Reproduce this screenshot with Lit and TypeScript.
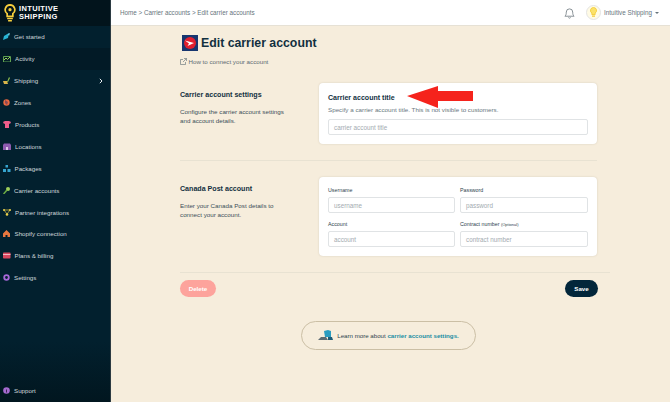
import { LitElement, html, css, svg } from 'lit';
import { customElement } from 'lit/decorators.js';

const NAV = [
  { label: 'Get started', w: 7, icon: svg`<path d="M0 7l1-4 5-3-1 5z" fill="#27b5d6"/><path d="M5 1l2-1-1 3z" fill="#7ddcf0"/>` },
  { label: 'Activity', w: 8, icon: svg`<path d="M.5 1.500h7v5.500h-7z" fill="none" stroke="#5fa050"/><path d="M1 5l2-2 1.500 1.500L7 2" fill="none" stroke="#9ccf5a"/>` },
  { label: 'Shipping', w: 7, icon: svg`<path d="M0 4h4l1 3H1z" fill="#d9b44a"/><path d="M4 5l2-5 1 1-2 4z" fill="#8fbf4d"/>` },
  { label: 'Zones', w: 7, icon: svg`<circle cx="3.500" cy="3.500" r="3.200" fill="#e8673f"/><path d="M2 1l3 2-1 3-2-2z" fill="#8a4a55"/>` },
  { label: 'Products', w: 8, icon: svg`<path d="M0 1l2-1h4l2 1-1 2-1-.5V7H2V2.500L1 3z" fill="#ee5d8b"/>` },
  { label: 'Locations', w: 8, icon: svg`<path d="M0 2l1-1.500h6L8 2v5H0z" fill="#8d5bb0"/><path d="M3 4h2v3H3z" fill="#d9c6e6"/>` },
  { label: 'Packages', w: 7.5, icon: svg`<path d="M2.500 0h2.500v2.500H2.500zM0 4h3v3H0zM4.500 4h3v3h-3z" fill="#36a5d0"/>` },
  { label: 'Carrier accounts', w: 7, icon: svg`<circle cx="5" cy="2" r="2" fill="#9fcf5a"/><path d="M4 3L.5 7" stroke="#6fae45" stroke-width="1.500"/>` },
  { label: 'Partner integrations', w: 8, icon: svg`<path d="M1 1l3 4 3-4z" fill="none" stroke="#c9b341" stroke-width=".8"/><circle cx="1" cy="1" r="1" fill="#ecd14a"/><circle cx="7" cy="1" r="1" fill="#ecd14a"/><circle cx="4" cy="5.500" r="1.300" fill="#ecd14a"/>` },
  { label: 'Shopify connection', w: 7.5, icon: svg`<path d="M0 3.500L3.500 0 7 3.500V7H4.500V5h-2v2H0z" fill="#e8773f"/>` },
  { label: 'Plans & billing', w: 7.5, icon: svg`<rect y=".5" width="7.500" height="6" rx=".8" fill="#d8475f"/><path d="M0 2h7.500v1H0z" fill="#f2b5bf"/>` },
  { label: 'Settings', w: 7, icon: svg`<circle cx="3.500" cy="3.500" r="2.300" fill="none" stroke="#a867d8" stroke-width="1.800"/>` },
];

@customElement('app-root')
export class AppRoot extends LitElement {
  static styles = css`
    :host {
      display: block;
      width: 670px;
      height: 402px;
      font-family: 'Liberation Sans', Arial, sans-serif;
      color: #12303f;
      overflow: hidden;
    }
    .app {
      display: flex;
      height: 402px;
    }
    .sidebar {
      width: 110px;
      flex: none;
      display: flex;
      flex-direction: column;
      background: linear-gradient(#02202e 85%, #01161f);
      color: #cfd8dc;
      border-right: 1px solid #2b3a42;
    }
    .brand {
      height: 26px;
      box-sizing: border-box;
      padding: 4px 0 0 4px;
      display: flex;
      gap: 3px;
      background: #02141c;
    }
    .brand-name {
      color: #fff;
      font-size: 7.5px;
      line-height: 8px;
      font-weight: 700;
      letter-spacing: 0.35px;
      padding-top: 1px;
    }
    nav {
      display: flex;
      flex-direction: column;
    }
    .nav-item {
      height: 21.9px;
      display: flex;
      align-items: center;
      gap: 4px;
      padding-left: 3px;
      padding-right: 7px;
      font-size: 6.2px;
    }
    .nav-item.current {
      background: #021a26;
    }
    .chevron {
      margin-left: auto;
    }
    .support {
      margin-top: auto;
      height: 23px;
    }
    .main {
      flex: 1;
      display: flex;
      flex-direction: column;
      background: #f6eddc;
      min-width: 0;
    }
    .topbar {
      height: 26px;
      flex: none;
      box-sizing: border-box;
      background: #fff;
      border-bottom: 1px solid #e6e1d5;
      display: flex;
      align-items: center;
      padding: 0 11px 0 9px;
      font-size: 6.3px;
      color: #66747c;
    }
    .user {
      margin-left: auto;
      display: flex;
      align-items: center;
    }
    .avatar {
      width: 15px;
      height: 15px;
      box-sizing: border-box;
      border: 1px solid #e4e4e4;
      border-radius: 50%;
      background: #fffbe5;
      display: flex;
      align-items: center;
      justify-content: center;
      margin: 0 3px 0 11px;
    }
    .caret {
      width: 0;
      height: 0;
      margin-left: 3px;
      border: 2px solid transparent;
      border-top-color: #66747c;
      border-bottom: 0;
    }
    .content {
      padding: 8px 13px 0 69px;
    }
    .title-row {
      display: flex;
      align-items: center;
      gap: 3px;
      padding-left: 2px;
      height: 18px;
    }
    h1 {
      margin: 0;
      font-size: 12.3px;
      line-height: 18px;
      font-weight: 700;
      color: #12303f;
    }
    .help {
      display: flex;
      align-items: center;
      gap: 1.5px;
      margin-top: 5px;
      height: 9px;
      font-size: 6.2px;
      color: #5d6b72;
    }
    .section {
      display: flex;
      width: 417px;
    }
    .first {
      margin-top: 17px;
    }
    .intro {
      width: 139px;
      flex: none;
      padding-top: 8px;
      box-sizing: border-box;
    }
    h2 {
      margin: 0;
      font-size: 7.1px;
      line-height: 9px;
      font-weight: 700;
      color: #12303f;
    }
    .intro p {
      margin: 7px 0 0;
      font-size: 6.25px;
      line-height: 9px;
      color: #3c4f59;
      width: 110px;
    }
    .card {
      position: relative;
      flex: 1;
      background: #fff;
      border-radius: 4px;
      box-shadow: 0 0 2px rgba(120, 110, 90, 0.25);
      padding: 9px;
      box-sizing: border-box;
    }
    .card-title {
      font-size: 7.05px;
      line-height: 12px;
      font-weight: 700;
      color: #12303f;
    }
    .card-hint {
      margin-top: 2px;
      font-size: 6.25px;
      line-height: 8px;
      color: #6a7880;
    }
    .input {
      box-sizing: border-box;
      height: 16px;
      border: 1px solid #e0e3e5;
      border-radius: 2px;
      padding-left: 5px;
      display: flex;
      align-items: center;
      font-size: 6.3px;
      color: #a3abb0;
      background: #fff;
    }
    .card-hint + .input {
      margin-top: 5px;
    }
    .arrow {
      position: absolute;
      left: 88px;
      top: 3px;
    }
    .divider {
      width: 417px;
      height: 1px;
      margin: 16px 0;
      background: #e8e2d2;
    }
    .fields {
      display: grid;
      grid-template-columns: 127px 128px;
      column-gap: 5px;
      row-gap: 7px;
    }
    .field label {
      display: block;
      height: 8px;
      font-size: 5.3px;
      line-height: 8px;
      color: #2e434e;
      margin-bottom: 3px;
    }
    .field small {
      font-size: 4px;
      line-height: 0;
    }
    .actions {
      width: 430px;
      border-top: 1px solid #e8e2d2;
      padding-top: 7px;
      margin-top: 16px;
      display: flex;
      justify-content: space-between;
    }
    .btn {
      height: 17px;
      border-radius: 9px;
      display: flex;
      align-items: center;
      justify-content: center;
      font-size: 6.2px;
      font-weight: 700;
      color: #fff;
    }
    .delete {
      width: 36px;
      background: #fda39c;
    }
    .save {
      width: 33px;
      background: #02263a;
      margin-right: 12px;
    }
    .learn {
      width: 175px;
      height: 29px;
      box-sizing: border-box;
      margin: 24px 0 0 121px;
      border: 1px solid #cbbfa5;
      border-radius: 15px;
      display: flex;
      align-items: center;
      justify-content: center;
      gap: 4px;
      font-size: 6.15px;
      color: #2e434e;
    }
    .learn b {
      color: #1b8ea3;
    }
  `;

  renderNavIcon(w: number, icon: unknown) {
    return html`<svg width=${w} height="7" viewBox="0 0 ${w} 7">${icon}</svg>`;
  }

  render() {
    return html`
      <div class="app">
        <aside class="sidebar">
          <div class="brand">
            <svg width="12" height="18" viewBox="0 0 12 19">
              <path d="M6 .9a5.100 5.100 0 0 0-3 9.200V13h6v-2.900A5.100 5.100 0 0 0 6 .9z" fill="none" stroke="#f7cf3d" stroke-width="1.800"/>
              <circle cx="6" cy="6" r="1.700" fill="#f7cf3d"/>
              <path d="M3 14.500h6v1.500H3zM4 17h4v1.500H4z" fill="#f7cf3d"/>
            </svg>
            <div class="brand-name">INTUITIVE<br />SHIPPING</div>
          </div>
          <nav>
            ${NAV.map(
              (item) => html`
                <div class="nav-item ${item.label === 'Activity' ? 'current' : ''}">
                  ${this.renderNavIcon(item.w, item.icon)}
                  <span>${item.label}</span>
                  ${item.label === 'Shipping'
                    ? html`<svg class="chevron" width="4" height="6" viewBox="0 0 4 6"><path d="M.8.8L3 3 .8 5.200" fill="none" stroke="#e6ecef" stroke-width="1"/></svg>`
                    : ''}
                </div>
              `
            )}
          </nav>
          <div class="nav-item support">
            <svg width="7" height="7" viewBox="0 0 7 7">
              <circle cx="3.500" cy="3.500" r="3.300" fill="#a56ad0"/>
              <path d="M3 2.500h1v3H3z" fill="#3b2352"/>
            </svg>
            <span>Support</span>
          </div>
        </aside>
        <div class="main">
          <header class="topbar">
            <span>Home &gt; Carrier accounts &gt; Edit carrier accounts</span>
            <div class="user">
              <svg width="11" height="12" viewBox="0 0 12 13">
                <path d="M1 10c1-1 1.500-2 1.500-4.500a3.500 3.500 0 0 1 7 0C9.500 8 10 9 11 10z" fill="none" stroke="#6e7a80" stroke-width=".9"/>
                <path d="M4.800 11.300a1.300 1.300 0 0 0 2.400 0" fill="none" stroke="#6e7a80" stroke-width=".9"/>
              </svg>
              <div class="avatar">
                <svg width="7" height="11" viewBox="0 0 7 11">
                  <path d="M3.500.5a3 3 0 0 0-1.700 5.500V7.500h3.400V6A3 3 0 0 0 3.500.5z" fill="#fbe26a" stroke="#f3c92f" stroke-width=".8"/>
                  <path d="M2 8.500h3v1.200H2z" fill="#f3c92f"/>
                </svg>
              </div>
              <span>Intuitive Shipping</span>
              <i class="caret"></i>
            </div>
          </header>
          <div class="content">
            <div class="title-row">
              <svg width="16" height="16" viewBox="0 0 16 16">
                <rect width="16" height="16" fill="#17366f"/>
                <circle cx="8" cy="8" r="6" fill="#e0202f"/>
                <path d="M3 5.500l9 2.500-6.500 3L7 8.500z" fill="#fff"/>
              </svg>
              <h1>Edit carrier account</h1>
            </div>
            <div class="help">
              <svg width="7" height="7" viewBox="0 0 7 7">
                <path d="M5.500 4v2.500h-5v-5H3M4 .5h2.500V3M6.500.5L3 4" fill="none" stroke="#5d6b72" stroke-width=".6"/>
              </svg>
              How to connect your account
            </div>
            <section class="section first">
              <div class="intro">
                <h2>Carrier account settings</h2>
                <p>Configure the carrier account settings and account details.</p>
              </div>
              <div class="card">
                <div class="card-title">Carrier account title</div>
                <div class="card-hint">Specify a carrier account title. This is not visible to customers.</div>
                <div class="input">carrier account title</div>
                <svg class="arrow" width="67" height="22" viewBox="0 0 67 22">
                  <path d="M0 10L31 0v5h35v10H31v7z" fill="#f5231c"/>
                </svg>
              </div>
            </section>
            <div class="divider"></div>
            <section class="section">
              <div class="intro">
                <h2>Canada Post account</h2>
                <p>Enter your Canada Post details to connect your account.</p>
              </div>
              <div class="card">
                <div class="fields">
                  <div class="field"><label>Username</label><div class="input">username</div></div>
                  <div class="field"><label>Password</label><div class="input">password</div></div>
                  <div class="field"><label>Account</label><div class="input">account</div></div>
                  <div class="field">
                    <label>Contract number <small>(Optional)</small></label>
                    <div class="input">contract number</div>
                  </div>
                </div>
              </div>
            </section>
            <div class="actions">
              <div class="btn delete">Delete</div>
              <div class="btn save">Save</div>
            </div>
            <div class="learn">
              <svg width="15" height="11" viewBox="0 0 15 11">
                <path d="M6 1l4-1 3 1v6H7z" fill="#2a9cc0"/>
                <path d="M0 10l3-3h5l2 3z" fill="#5d6b72"/>
                <path d="M10 7h4l1 3h-5z" fill="#1f5d78"/>
              </svg>
              <span>Learn more about <b>carrier account settings.</b></span>
            </div>
          </div>
        </div>
      </div>
    `;
  }
}
